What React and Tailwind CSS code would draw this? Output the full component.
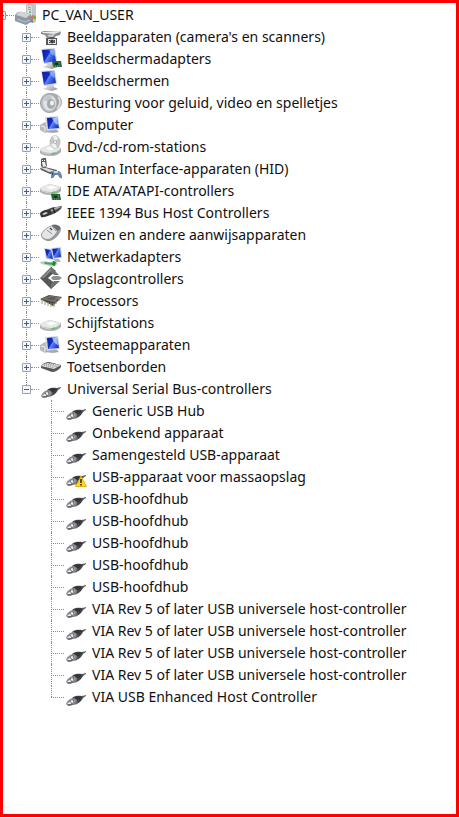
import { useState } from "react";
import clsx from "clsx";

// Gradients shared by all device icons
const IconDefs = () => (
    <svg className="absolute size-0" aria-hidden="true">
        <defs>
            <linearGradient id="screen" x1="0" y1="0" x2="1" y2="0.6">
                <stop offset="0" stopColor="#0a1a9c" />
                <stop offset="0.5" stopColor="#1630d0" />
                <stop offset="0.55" stopColor="#5f86f0" />
                <stop offset="1" stopColor="#1c38c8" />
            </linearGradient>
            <linearGradient id="metal" x1="0" y1="0" x2="1" y2="1">
                <stop offset="0" stopColor="#f4f5f5" />
                <stop offset="0.5" stopColor="#c9cccd" />
                <stop offset="1" stopColor="#85898b" />
            </linearGradient>
            <linearGradient id="dark" x1="0" y1="1" x2="1" y2="0">
                <stop offset="0" stopColor="#8d8f92" />
                <stop offset="0.5" stopColor="#3d3e41" />
                <stop offset="1" stopColor="#6e7073" />
            </linearGradient>
        </defs>
    </svg>
);

const Drive = () => (
    <>
        <path d="M0 8c1-2 6-4 10-5l11 3v4c-3 3-7 4-10 4-5 0-9-1-11-3Z" fill="#a9adac" />
        <path d="M0 8c1-2 6-4 10-5l11 3c-2 3-6 5-10 5C6 11 2 10 0 8Z" fill="#e6e8e7" />
        <path d="M1 9.500c3 1.500 6 2.500 10 2.500" fill="none" stroke="#d3d6d5" />
        <path d="m6 6.500 5-2 6 2-6 2Z" fill="#fafbfb" />
        <path d="m12 12 3-1" stroke="#54c850" strokeWidth="1.500" />
    </>
);

const Circuit = () => (
    <>
        <path d="M0 0h9l1 6H1Z" fill="#27633c" />
        <path d="M3 2h3v2H3Z" fill="#172a20" />
        <path d="M1 5h8M7 2h1" stroke="#78b277" strokeWidth="1" strokeDasharray="1 1" />
    </>
);

const Monitor = () => (
    <>
        <path d="m7 14 6-1 1 4 4 2-6 2-9-2 4-2Z" fill="url(#metal)" />
        <path d="m1 1 14-1 2 14-13 2Z" fill="#ccd1df" />
        <path d="m2 2 12-1 2 12-12 2Z" fill="url(#screen)" />
        <path d="m9 1.500 5-.5 1 7c-3-1-5-3-6-6.500Z" fill="#a7c4ff" opacity=".6" />
    </>
);

const Desktop = () => (
    <>
        <path d="m0 11 5-3 4 2v7l-4 2-5-3Z" fill="#b6babd" />
        <path d="m1 12 4 1v5" fill="none" stroke="#f2f3f3" />
        <path d="m7 15 8-1 4 4-6 1-8-1Z" fill="#a5a9ad" />
        <path d="m5 3 13-1 2 13-13 2Z" fill="#d3d7e2" />
        <path d="m7 4 10-1 2 11-11 1Z" fill="url(#screen)" />
        <path d="m12 3.500 5-.5 1 8c-3-1-5-4-6-7.500Z" fill="#b9cfff" opacity=".8" />
    </>
);

const Usb = () => (
    <>
        <path d="M7 12c4-3 7-2 10-2l4-1v1l-3 2c-2 4-6 7-10 7Z" fill="url(#dark)" />
        <path d="M8 12c3-2 6-2 10-1l-5 3-5 1Z" fill="#343538" />
        <path d="M1 18c1-3 4-6 8-6l3 2c-1 4-5 6-9 6Z" fill="#898c90" />
        <path d="m2 18 5-4 3 1-4 3Z" fill="#eceef0" />
        <path d="m5 15 2 3M8 13.500l1 3M3 19l5-1" stroke="#515459" strokeWidth=".8" />
    </>
);

const icons = {
    root: (
        <>
            <path d="m11 1 3-2 7 1v14l-3 3-7-2Z" fill="#c3c6c9" />
            <path d="m12 1 5 1v13l-5-1Z" fill="#e7e9eb" stroke="#b3b6b9" strokeWidth=".5" />
            <path d="m13 3 3 1m-3 1 3 1" stroke="#92969a" />
            <circle cx="15" cy="8" r="1" fill="#39b64a" />
            <path d="M0 11c2-3 4-4 7-3l9 2v8l-5 3-11-4Z" fill="#8d98a2" />
            <path d="M1 11c2-3 4-4 7-3l8 2-5 4Z" fill="#cdd5da" />
            <path d="m2 15 8 3 5-2" fill="none" stroke="#b5c6d2" strokeWidth="1" />
            <path d="m15 13 3-2v4l-3 1Z" fill="#dd7262" />
            <path d="m18 11 3 1v4h-3Z" fill="#68b942" />
            <path d="m15 16 3-1v4l-3-1Z" fill="#638bd1" />
            <path d="m18 15h3v3l-3 1Z" fill="#e5c84a" />
        </>
    ),
    imaging: (
        <>
            <path d="m1 6 3-1h15l2 1-1 3-4 1-2 2H7L5 9 1 8Z" fill="#85898b" />
            <path d="m2 6 17-1 1 1-6 2-11-1Z" fill="#e9ebec" />
            <path d="m7 9 8-1-2 3H9Z" fill="#c9cccd" />
            <path d="M6 12h3l1-1h4l1 1h2v7H6Z" fill="#55585b" />
            <path d="M8 13h8v5H8Z" fill="#e5e7e8" />
            <circle cx="12" cy="15.500" r="2" fill="#3c3f42" />
            <path d="M9 14h1v1H9Zm0 2h1v1H9Zm5-2h1v3h-1Z" fill="#4a4d50" />
        </>
    ),
    adapter: (
        <>
            <Monitor />
            <g transform="translate(12 13)"><Circuit /></g>
        </>
    ),
    monitor: <Monitor />,
    sound: (
        <>
            <path d="M11 1c6 0 11 4 11 9 0 4-4 9-10 11Z" fill="#a9adaf" />
            <path d="M18 5c3 3 3 7-1 12" fill="none" stroke="#e2e4e5" strokeWidth="1.500" />
            <ellipse cx="9" cy="11" rx="8.500" ry="9.500" fill="#bcc0c2" stroke="#999da0" />
            <ellipse cx="9.500" cy="11" rx="6.500" ry="7.500" fill="#e0e2e3" />
            <path d="M4 8c1-3 4-5 7-4l1 4-3 2Z" fill="#c2c6c8" />
            <ellipse cx="11" cy="12" rx="4" ry="5" fill="#a4a9ac" />
            <ellipse cx="12" cy="11" rx="2" ry="2.500" fill="#f1f2f2" />
        </>
    ),
    desktop: <Desktop />,
    dvd: (
        <>
            <g transform="translate(0 6)"><Drive /></g>
            <ellipse cx="15" cy="6" rx="5" ry="6.500" fill="#c6cac9" stroke="#a4a9a8" strokeWidth=".6" />
            <path d="m15 6-2-6c2-1 4 0 5 2ZM15 6l2 6c-2 1-5-1-6-3Z" fill="#eef1ef" />
            <circle cx="15" cy="6" r="1.500" fill="#fff" stroke="#8d9190" strokeWidth=".6" />
        </>
    ),
    hid: (
        <>
            <path d="m1 1 2-1h3l1 8-4 2-2-2Z" fill="#5d6063" />
            <path d="M2 4h3l1 4-3 1Z" fill="#eef0f0" />
            <path d="M2 2h1v1H2Zm2 0h1v1H4Z" fill="#fff" />
            <path d="m0 10 5-1 12 3-1 3-6 1-9-4Z" fill="#5b5e60" />
            <path d="M1 10h5l9 3-6 1Z" fill="#d9dcdd" />
            <path d="M11 20c0-4 1-7 3-7h5c2 1 3 4 3 7-2 1-3-1-4-3h-3c-1 2-2 4-4 3Z" fill="#6586a8" />
            <path d="M14 13h4v2h-4Z" fill="#c1d8e7" />
            <path d="M12 15h1v2h-1Z" fill="#253a58" />
            <path d="M19 15h1v1h-1Z" fill="#62c05b" />
        </>
    ),
    ide: (
        <>
            <g transform="translate(0 1)"><Drive /></g>
            <g transform="translate(11 14)"><Circuit /></g>
        </>
    ),
    firewire: (
        <>
            <path d="M5 9c3-2 7-4 11-4l6-1-1 3c-3 3-9 6-14 7Z" fill="#4d4f51" />
            <path d="m11 8 5-3 5 0-6 3-4 2Z" fill="#a5a7a9" />
            <path d="M0 12c0-2 5-5 9-4l3 2c-1 3-7 6-11 5Z" fill="#343537" />
            <path d="m2 12 4-2 2 1-4 2Z" fill="#d5d7d8" />
            <path d="m13 6 2 5" stroke="#222325" strokeWidth="1.500" />
        </>
    ),
    mouse: (
        <>
            <path d="M1 10c2-4 7-8 12-9 4-1 8 1 8 4 0 4-6 11-11 12-4 1-10-3-9-7Z" fill="#97999c" />
            <path d="M2 10c1-3 6-7 10-8 3 1 5 3 5 5-2 4-6 8-9 8-3 0-7-2-6-5Z" fill="#e3e5e6" />
            <path d="M12 1c4-1 9 1 8 4l-3 2c-1-2-3-4-5-5Z" fill="#6a6c6f" />
            <path d="m7 6 5 4m0-8 4 5" fill="none" stroke="#8a8d90" />
            <path d="m10 4 2 2" stroke="#46494c" strokeWidth="1.500" />
        </>
    ),
    network: (
        <>
            <path d="m11 2 10-1 1 11-9 1Z" fill="#cbd4ec" />
            <path d="m12 3 8-1 1 9-7 1Z" fill="url(#screen)" />
            <path d="m4 2 8 1 2 11-8-1Z" fill="#cbd4ec" />
            <path d="m5 3 6 1 2 9-6-1Z" fill="url(#screen)" />
            <path d="m13 13 6 0 2 3-5 0Z" fill="#aeb5bf" />
            <path d="m0 16 5-1 4 1 7-1 2 3-6 3-6-2-5-1Z" fill="#c2cbc6" />
            <path d="m4 16 10 1v2l-9-1Z" fill="#2caf51" />
            <path d="m13 15 3 1-1 4-3-1Z" fill="#178b3d" />
        </>
    ),
    storage: (
        <>
            <path d="M0 10 11-1l5 4-8 7 8 6-5 5Z" fill="#565859" />
            <path d="m1 10 10-10 2 1-9 9Z" fill="#898b8c" />
            <path d="m11-1 8 8-5 0-3-3Z" fill="#6f7172" />
            <path d="m11 21 9-8h-6l-3 3Z" fill="#6f7172" />
            <path d="m11 10 2-2h6l3 2-3 2h-6Z" fill="#8e9091" />
        </>
    ),
    processor: (
        <>
            <path d="m0 9 9-4 13 2-7 7-2 2Z" fill="#4a4944" />
            <path d="m1 9 9-3 11 1-7 5Z" fill="#77766f" />
            <path d="m5 9 6-2 6 1-4 2Z" fill="#5b5a55" />
            <path d="M2 10v4m3-3v4m3-3v4m3-3v4m3-4v4m2-6v3m3-6v3" stroke="#a39876" />
        </>
    ),
    disk: <g transform="translate(0 5)"><Drive /></g>,
    keyboard: (
        <>
            <path d="M1 10c2-3 5-4 8-4l12 3v2c-2 3-6 5-9 5L1 12Z" fill="#55575a" />
            <path d="M1 10c2-2 5-3 8-3l12 2-7 4Z" fill="#dddfe0" />
            <path d="m4 9 10 3M6 8l11 3M9 7.500l10 2" stroke="#84878a" strokeDasharray="1 1" />
        </>
    ),
    usb: <Usb />,
    usbWarning: (
        <>
            <Usb />
            <path d="m16 10 5.500 10.500h-11Z" fill="#ffd91e" stroke="#d8a800" strokeWidth=".8" strokeLinejoin="round" />
            <path d="M16 13v4m0 1v1.500" stroke="#241c00" strokeWidth="1.500" />
        </>
    ),
};

const tree = {
    label: "PC_VAN_USER",
    icon: "root",
    open: true,
    children: [
        { label: "Beeldapparaten (camera's en scanners)", icon: "imaging" },
        { label: "Beeldschermadapters", icon: "adapter" },
        { label: "Beeldschermen", icon: "monitor" },
        { label: "Besturing voor geluid, video en spelletjes", icon: "sound" },
        { label: "Computer", icon: "desktop" },
        { label: "Dvd-/cd-rom-stations", icon: "dvd" },
        { label: "Human Interface-apparaten (HID)", icon: "hid" },
        { label: "IDE ATA/ATAPI-controllers", icon: "ide" },
        { label: "IEEE 1394 Bus Host Controllers", icon: "firewire" },
        { label: "Muizen en andere aanwijsapparaten", icon: "mouse" },
        { label: "Netwerkadapters", icon: "network" },
        { label: "Opslagcontrollers", icon: "storage" },
        { label: "Processors", icon: "processor" },
        { label: "Schijfstations", icon: "disk" },
        { label: "Systeemapparaten", icon: "desktop" },
        { label: "Toetsenborden", icon: "keyboard" },
        {
            label: "Universal Serial Bus-controllers",
            icon: "usb",
            open: true,
            children: [
                { label: "Generic USB Hub", icon: "usb" },
                { label: "Onbekend apparaat", icon: "usb" },
                { label: "Samengesteld USB-apparaat", icon: "usb" },
                { label: "USB-apparaat voor massaopslag", icon: "usbWarning" },
                { label: "USB-hoofdhub", icon: "usb" },
                { label: "USB-hoofdhub", icon: "usb" },
                { label: "USB-hoofdhub", icon: "usb" },
                { label: "USB-hoofdhub", icon: "usb" },
                { label: "USB-hoofdhub", icon: "usb" },
                { label: "VIA Rev 5 of later USB universele host-controller", icon: "usb" },
                { label: "VIA Rev 5 of later USB universele host-controller", icon: "usb" },
                { label: "VIA Rev 5 of later USB universele host-controller", icon: "usb" },
                { label: "VIA Rev 5 of later USB universele host-controller", icon: "usb" },
                { label: "VIA USB Enhanced Host Controller", icon: "usb" },
            ],
        },
    ],
};

const TreeNode = ({ node, level = 0, last = false }) => {
    const [open, setOpen] = useState(Boolean(node.open));
    const isDevice = level === 2;

    return (
        <li className="relative">
            {level > 0 && (
                <span
                    className={clsx(
                        "absolute left-1 top-0 border-l border-dotted border-[#8c8c8c]",
                        last ? "h-[11px]" : "bottom-0"
                    )}
                />
            )}
            <div className="flex h-[22px] items-center">
                {isDevice ? (
                    <span className="ml-1 w-[13px] border-t border-dotted border-[#8c8c8c]" />
                ) : (
                    <>
                        <button
                            type="button"
                            className="relative size-[9px] shrink-0 rounded-[1px] border border-[#979eac] bg-[#f6f7f9]"
                            onClick={() => setOpen(!open)}
                            aria-expanded={open}
                            aria-label={node.label}
                        >
                            <span className="absolute left-px top-[3px] h-px w-[5px] bg-[#4a5b86]" />
                            {!open && <span className="absolute left-[3px] top-px h-[5px] w-px bg-[#4a5b86]" />}
                        </button>
                        <span className="w-2 border-t border-dotted border-[#8c8c8c]" />
                    </>
                )}
                <svg viewBox="0 0 22 22" className="ml-px size-[22px] shrink-0 overflow-visible" aria-hidden="true">
                    {icons[node.icon]}
                </svg>
                <span className="ml-[5px] whitespace-nowrap">{node.label}</span>
            </div>

            {open && node.children && (
                <ul className="ml-[25px]">
                    {node.children.map((child, index) => (
                        <TreeNode
                            key={index}
                            node={child}
                            level={level + 1}
                            last={index === node.children.length - 1}
                        />
                    ))}
                </ul>
            )}
        </li>
    );
};

const App = () => {
    return (
        <main className="min-h-screen overflow-hidden border-3 border-[#ff0000] bg-white pt-px font-['Noto_Sans',sans-serif] text-[14px] leading-[22px] text-[#111111]">
            <IconDefs />
            <ul className="-ml-1.5">
                <TreeNode node={tree} />
            </ul>
        </main>
    );
};

export default App;
